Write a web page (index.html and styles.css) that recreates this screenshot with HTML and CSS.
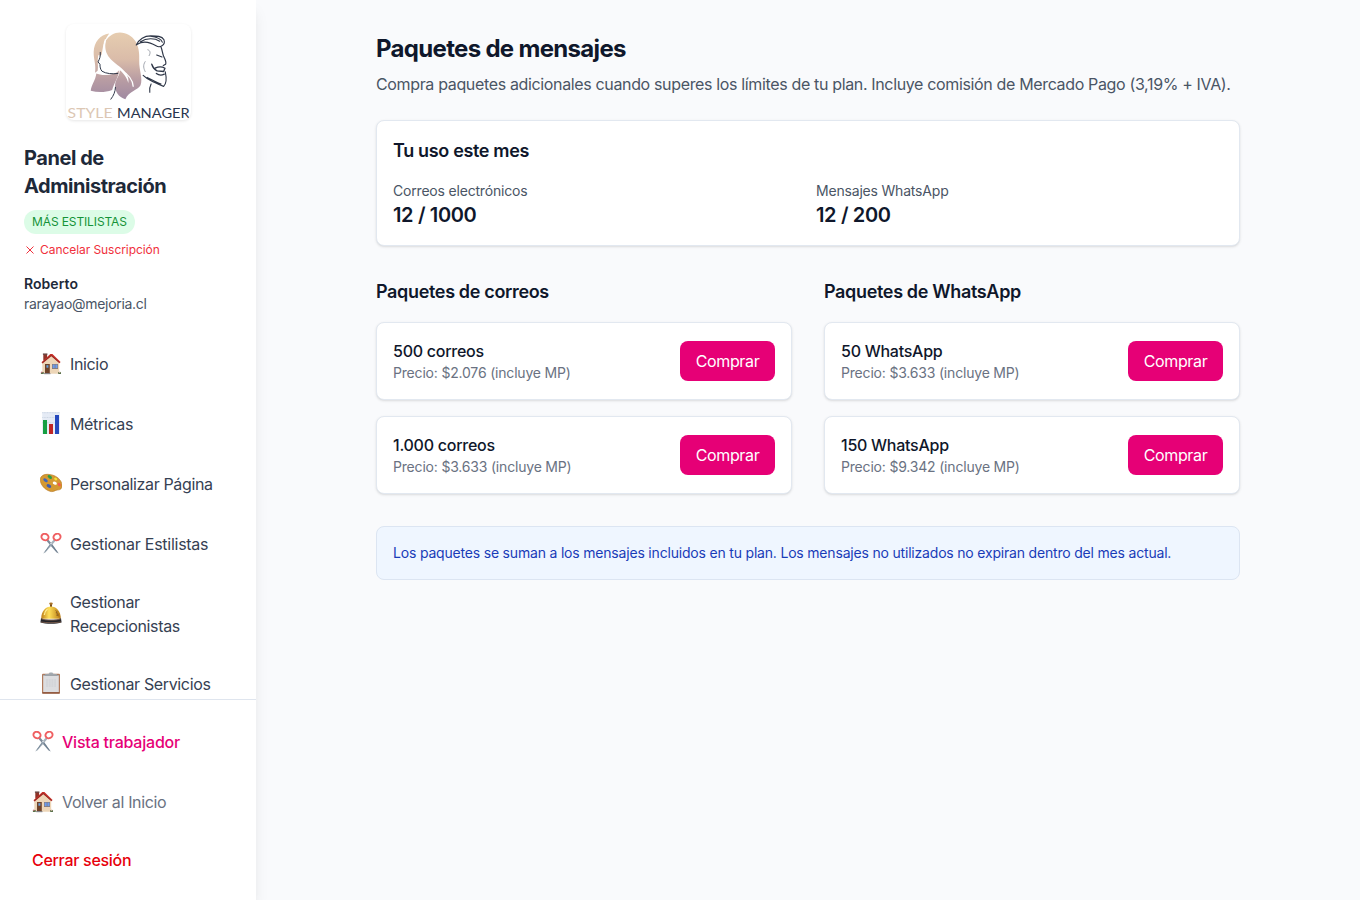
FILE: index.html
```html
<!DOCTYPE html>
<html lang="es">
<head>
<meta charset="utf-8">
<title>Paquetes de mensajes</title>
<link rel="stylesheet" href="styles.css">
</head>
<body>
<svg class="defs" aria-hidden="true">
  <defs>
    <linearGradient id="hair" gradientUnits="userSpaceOnUse" x1="0" y1="48" x2="0" y2="250"><stop offset="0" stop-color="#e6cdb0"/><stop offset=".4" stop-color="#dabca9"/><stop offset=".7" stop-color="#b99da3"/><stop offset="1" stop-color="#a08aa2"/></linearGradient>
    <linearGradient id="gold" x1="0" y1="0" x2="1" y2="0"><stop offset="0" stop-color="#bd7d18"/><stop offset=".4" stop-color="#ffe05a"/><stop offset="1" stop-color="#b87912"/></linearGradient>
    <symbol id="house" viewBox="0 0 22 22">
      <path d="M3.3 1.3h3.8v6H3.3z" fill="#8d3429"/><path d="M2.9.5h4.5v1.2H2.9z" fill="#543330"/>
      <path d="M2.3 9 11 2l8.2 7v11.8H2.3z" fill="#edd6b8"/>
      <path d="M1.5 9.3 10.3 1h2.1l8.2 8-1.2 1.3L11.3 3.2 2.6 10.5z" fill="#c92d26"/><path d="m2.4 9.7 8.8-7.2 8.3 7.1" fill="none" stroke="#5e302b" stroke-width=".6"/>
      <path d="M5 11h4.8v9.6H5z" fill="#704329"/><path d="M6.4 12.2h2v2.5h-2z" fill="#65a0de"/>
      <path d="M12 11h6v5h-6z" fill="#8a786b"/><path d="M12.6 11.6h2.1v3.7h-2.1zm2.8 0h2.1v3.7h-2.1z" fill="#6a9cf0"/>
      <path d="M4.2 20h6.2v1.2H4.2z" fill="#858388"/><path d="M.9 18.9h2.8v2.1H.9zm17.3 0h2.8v2.1h-2.8z" fill="#59724c"/><circle cx="1.8" cy="19.3" r=".8" fill="#c9747c"/><circle cx="19.7" cy="19.3" r=".8" fill="#d8b9a8"/>
    </symbol>
    <symbol id="chart" viewBox="0 0 22 22">
      <path d="M2.2 0h17.6v22H2.2z" fill="#e5ebf5"/><path d="M2.2.7h17.6M2.2 5.5h17.6M2.2 10.7h17.6" stroke="#c3cedc" stroke-width=".7" stroke-dasharray="1 .6"/>
      <path d="M3 8h4v14H3z" fill="#169f42"/><path d="M9 12h4v10H9z" fill="#bf2525"/><path d="M15 3h4v19h-4z" fill="#2549bd"/>
    </symbol>
    <symbol id="palette" viewBox="0 0 22 22">
      <path d="M.3 6.8C.3 2.8 4 .9 9 1.4c5.4.5 9.6 3 11.8 6.8 1.6 2.8 1.6 6 .2 7.6-1.4 1.5-3.5.9-5.2 1.6-1.8.8-3.2 1.7-5.8.9C4.6 16.6.3 11.6.3 6.8z" fill="#d59932" stroke="#b4731e" stroke-width=".6"/>
      <ellipse cx="14.8" cy="10.2" rx="2.1" ry="1.5" fill="#fff" transform="rotate(20 14.8 10.2)"/>
      <ellipse cx="5.5" cy="7.2" rx="2.5" ry="1.5" fill="#4067bc" transform="rotate(35 5.5 7.2)"/><ellipse cx="9.8" cy="4" rx="2.4" ry="1.5" fill="#299c47" transform="rotate(35 9.8 4)"/><ellipse cx="15.7" cy="6" rx="1.7" ry="1.2" fill="#f4e234" transform="rotate(40 15.7 6)"/><ellipse cx="8.9" cy="13" rx="2.5" ry="1.6" fill="#3f5db0" transform="rotate(25 8.9 13)"/><ellipse cx="19.2" cy="11.6" rx="1.9" ry="1.3" fill="#f2584f" transform="rotate(50 19.2 11.6)"/>
    </symbol>
    <symbol id="scissors" viewBox="0 0 22 22">
      <path d="m8 6.2 4.3 5 6.5 9.4-2.2-1.2-6.8-7.6-3.4-4z" fill="#7d8b99"/><path d="m14 6.2-4.3 5-6.5 9.4 2.2-1.2 6.8-7.6 3.4-4z" fill="#a6b1bb"/>
      <path d="m5.2 18.5 6-7.8M16.8 18.5l-6-7.8" stroke="#63788c" stroke-width=".7"/><circle cx="11" cy="10.8" r=".8" fill="#eef1f4"/>
      <g fill="none" stroke="#ef5f61" stroke-width="1.9"><ellipse cx="5" cy="4" rx="3.6" ry="3.2" transform="rotate(25 5 4)"/><ellipse cx="17" cy="4" rx="3.6" ry="3.2" transform="rotate(-25 17 4)"/></g>
    </symbol>
    <symbol id="bell" viewBox="0 0 22 22">
      <path d="M10 1.5h2v4h-2z" fill="#7b511f"/><ellipse cx="11" cy="1.6" rx="1.8" ry="1.2" fill="#aa7227"/>
      <path d="M1.2 16.8c0-8 4.7-12.4 9.8-12.4s9.8 4.4 9.8 12.4z" fill="url(#gold)"/><path d="M7.5 7c-2 1.5-3 4-3.2 6" stroke="#ffed91" fill="none" stroke-width="1.3"/><path d="m15.5 8.5 2 1.5-1.6.7 2.6 1.6-2 .8 2.9 1" fill="none" stroke="#8a5a1c" stroke-width=".8"/>
      <path d="M1 16.2c5 2 15 2 20 0l.6 4.2c-5.2 1.8-16 1.8-21.2 0z" fill="#24252a"/><path d="M1.4 17c5 1.6 14.4 1.6 19.4 0M1 20c6 .9 13.7.9 20 0" stroke="#936b54" stroke-width=".7" fill="none"/>
    </symbol>
    <symbol id="clipboard" viewBox="0 0 22 22">
      <rect x="2" y="1.8" width="18" height="20" rx="1" fill="#b07a5c"/><path d="M3.2 3h15.6v17H3.2z" fill="#dcdde0"/><path d="M2.4 20.2h17.2v1.3H2.4z" fill="#8c563e"/><path d="M5 3.5V2.2l3.8-.5.8-1.3h2.8l.8 1.3 3.8.5v1.3z" fill="#a4abb1"/><path d="M3.2 3.3h15.6" stroke="#8b9096" stroke-width=".8"/>
      <path d="M6 8h10M6 10h10M6 12h10M6 14h10" stroke="#c8cbd1" stroke-width=".8" stroke-dasharray="2 .7"/>
    </symbol>
  </defs>
</svg>
<div class="app">
  <aside class="sidebar">
    <div class="sidebar-top">
      <svg class="logo" viewBox="28 22 375 291" role="img" aria-label="Style Manager">
        <g fill="url(#hair)">
          <path d="M157 51c-28 4-46 26-47 55-1 22 8 40 4 64l8-6c3-14-2-30 2-48 6 4 10 2 11-6 3-24 10-44 22-59z"/>
          <path d="M118 172c10 4 30 8 54 0 6-2 12-6 15-10-1 20-14 36-21 60-22 8-44 8-65 2 2-18 14-30 17-52z"/>
          <path d="M147 72c12-18 34-30 57-22 38 12 46 46 44 84-1 26 12 54 4 74-6 14-36 18-46 42-20-5-34-26-31-46 3-17 15-26 14-43 10 10 22 24 26 40 4-22-12-38-27-50-26-20-50-38-41-79z"/>
        </g>
        <path d="M190 160c18 10 38 26 40 52M146 68c-10 24-4 52 10 66 10 11 24 18 34 28" fill="none" stroke="#fff" stroke-width="4"/>
        <g fill="none" stroke="#2f3748" stroke-linecap="round" stroke-linejoin="round">
          <path d="M130 108c1 13-2 20-7 29l6 7c0 8 1 15 6 21 12 8 32 9 48 7M176 214c-1 14-5 24-14 36" stroke-width="3"/>
          <path d="M239 86c8-16 24-28 44-28 18 0 34 0 40 12 3 8 0 14-6 18M241 84c22-14 42-6 58 4 6 4 12 4 18 0M252 76c18-12 42-12 58-2M282 59c18 2 32 6 36 18" stroke-width="3.4"/>
          <path d="M314 92c5 12 4 20 9 30 4 9 8 16 5 22l-7 4M301 116l16 6" stroke-width="3.6"/>
          <path d="M274 100c8 2 9 10 4 18M266 136c-8 12-4 22 0 30" stroke="#8f959f" stroke-width="2.5"/>
          <path d="M296 156c8-4 20-6 30 0l-4 10-20-2M286 144c3 10 8 16 16 20M300 172c8 6 16 6 24 2" stroke-width="4"/>
          <path d="M260 178c8 8 18 14 28 18 12 6 22 12 34 15 8-8 9-26 5-44M272 184c12 6 28 14 42 20M284 204c-4 8-6 16-4 25" stroke-width="3.4"/>
        </g>
        <text x="31" y="307" class="logo-style" textLength="136" lengthAdjust="spacingAndGlyphs">STYLE</text>
        <text x="181" y="307" class="logo-manager" textLength="220" lengthAdjust="spacingAndGlyphs">MANAGER</text>
      </svg>
      <h2 class="panel-title">Panel de Administración</h2>
      <span class="badge">MÁS ESTILISTAS</span>
      <a class="cancel"><svg class="cross" viewBox="0 0 12 12"><path d="m2.5 2.5 7 7m0-7-7 7"/></svg><span>Cancelar Suscripción</span></a>
      <p class="user-name">Roberto</p>
      <p class="user-mail">rarayao@mejoria.cl</p>
    </div>
    <nav class="nav">
      <a class="item"><svg class="icon"><use href="#house"/></svg><span>Inicio</span></a>
      <a class="item"><svg class="icon raised"><use href="#chart"/></svg><span>Métricas</span></a>
      <a class="item"><svg class="icon"><use href="#palette"/></svg><span>Personalizar Página</span></a>
      <a class="item"><svg class="icon"><use href="#scissors"/></svg><span class="wide">Gestionar Estilistas</span></a>
      <a class="item"><svg class="icon raised"><use href="#bell"/></svg><span>Gestionar Recepcionistas</span></a>
      <a class="item"><svg class="icon raised"><use href="#clipboard"/></svg><span>Gestionar Servicios</span></a>
    </nav>
    <div class="sidebar-footer">
      <a class="item worker"><svg class="icon"><use href="#scissors"/></svg><span>Vista trabajador</span></a>
      <a class="item home"><svg class="icon"><use href="#house"/></svg><span>Volver al Inicio</span></a>
      <a class="item logout"><span>Cerrar sesión</span></a>
    </div>
  </aside>
  <main class="main">
    <div class="content">
      <header>
        <h1 class="title">Paquetes de mensajes</h1>
        <p class="subtitle">Compra paquetes adicionales cuando superes los límites de tu plan. Incluye comisión de Mercado Pago (3,19% + IVA).</p>
      </header>
      <section class="card usage">
        <h2 class="heading">Tu uso este mes</h2>
        <div class="usage-grid">
          <div><p class="label">Correos electrónicos</p><p class="value">12 / 1000</p></div>
          <div><p class="label">Mensajes WhatsApp</p><p class="value">12 / 200</p></div>
        </div>
      </section>
      <div class="packages">
        <section class="column">
          <h2 class="heading">Paquetes de correos</h2>
          <div class="card package"><div><p class="name">500 correos</p><p class="price">Precio: $2.076 (incluye MP)</p></div><button class="buy">Comprar</button></div>
          <div class="card package"><div><p class="name">1.000 correos</p><p class="price">Precio: $3.633 (incluye MP)</p></div><button class="buy">Comprar</button></div>
        </section>
        <section class="column">
          <h2 class="heading">Paquetes de WhatsApp</h2>
          <div class="card package"><div><p class="name">50 WhatsApp</p><p class="price">Precio: $3.633 (incluye MP)</p></div><button class="buy">Comprar</button></div>
          <div class="card package"><div><p class="name">150 WhatsApp</p><p class="price">Precio: $9.342 (incluye MP)</p></div><button class="buy">Comprar</button></div>
        </section>
      </div>
      <div class="note">Los paquetes se suman a los mensajes incluidos en tu plan. Los mensajes no utilizados no expiran dentro del mes actual.</div>
    </div>
  </main>
</div>
</body>
</html>
```
FILE: styles.css
```css
* { box-sizing: border-box; }
body, h1, h2, p { margin: 0; }
body {
  font: 400 16px/24px Inter, "Liberation Sans", sans-serif;
  letter-spacing: -0.35px;
  color: #0f172b;
  background: #f9fafc;
}
.defs { display: block; width: 0; height: 0; }
.app { display: flex; height: 900px; overflow: hidden; }

.sidebar {
  display: flex;
  flex-direction: column;
  width: 256px;
  flex: none;
  background: #fff;
  box-shadow: 0 10px 15px -3px rgba(0, 0, 0, .1), 0 4px 6px -4px rgba(0, 0, 0, .1);
}
.sidebar-top { display: flex; flex-direction: column; align-items: flex-start; flex: none; padding: 24px 24px 0; }
.logo {
  align-self: center;
  width: 125px;
  height: 96px;
  margin-bottom: 24px;
  border-radius: 8px;
  box-shadow: 0 1px 3px rgba(0, 0, 0, .1);
}
.logo text { font: 400 39px Lato, sans-serif; letter-spacing: 0; }
.logo-style { fill: #dcc7b4; }
.logo-manager { fill: #29354d; }
.panel-title { width: 208px; padding-right: 40px; font-size: 20px; line-height: 28px; font-weight: 700; color: #1e2939; letter-spacing: -0.45px; }
.badge { margin-top: 10px; padding: 4px 8px; border-radius: 12px; background: #dcfce7; color: #159338; font-size: 12px; line-height: 16px; letter-spacing: -0.12px; }
.cancel { display: flex; align-items: center; gap: 4px; margin-top: 8px; color: #f0303c; font-size: 12px; line-height: 16px; letter-spacing: -0.06px; }
.cross { width: 12px; height: 12px; fill: none; stroke: currentColor; stroke-width: 1; }
.user-name { margin-top: 16px; font-size: 14px; line-height: 20px; font-weight: 600; color: #1e2939; letter-spacing: 0.05px; }
.user-mail { font-size: 14px; line-height: 20px; color: #4a5565; letter-spacing: -0.3px; }

.nav { display: flex; flex-direction: column; gap: 8px; flex: 1; min-height: 0; overflow: hidden; padding: 24px 24px 0; }
.item { display: flex; align-items: center; gap: 8px; flex: none; min-height: 52px; padding: 2px 16px; color: #364153; }
.nav .item:nth-child(5) { min-height: 72px; }
.wide { letter-spacing: -0.26px; }
.icon { width: 22px; height: 22px; flex: none; }
.raised { margin-bottom: 2px; }
.sidebar-footer { display: flex; flex-direction: column; gap: 8px; flex: none; padding: 16px; border-top: 1px solid #dfe5ee; background: #fff; }
.worker { color: #e60076; font-weight: 500; letter-spacing: -0.22px; }
.home { color: #6a7282; }
.logout { min-height: 48px; color: #e7000b; font-weight: 500; letter-spacing: -0.3px; }

.main { flex: 1; padding: 33px 16px 32px; }
.content { display: flex; flex-direction: column; width: 864px; margin: 0 auto; }
.title { font-size: 24px; line-height: 32px; font-weight: 700; letter-spacing: -0.68px; }
.subtitle { margin-top: 7px; color: #4a5565; white-space: nowrap; }
.card { padding: 16px; border: 1px solid #e2e8f0; border-radius: 8px; background: #fff; box-shadow: 0 1px 3px rgba(0, 0, 0, .1), 0 1px 2px -1px rgba(0, 0, 0, .1); }
.usage { margin-top: 24px; }
.heading { font-size: 18px; line-height: 28px; font-weight: 600; letter-spacing: -0.34px; }
.usage-grid { display: grid; grid-template-columns: 1fr 1fr; gap: 16px; margin-top: 16px; }
.label, .price { font-size: 14px; line-height: 20px; color: #4a5565; letter-spacing: -0.19px; }
.value { font-size: 20px; line-height: 28px; font-weight: 600; letter-spacing: -0.35px; }
.packages { display: grid; grid-template-columns: 1fr 1fr; gap: 32px; margin-top: 32px; }
.column { display: flex; flex-direction: column; gap: 16px; }
.package { display: flex; align-items: center; justify-content: space-between; }
.name { font-weight: 500; letter-spacing: -0.26px; }
.price { color: #6a7282; }
.buy { width: 95px; height: 40px; padding: 0; border: 0; border-radius: 8px; background: #e60076; color: #fff; font: inherit; letter-spacing: -0.35px; }
.note { margin-top: 32px; padding: 16px; border: 1px solid #dce5f2; border-radius: 8px; background: #eff6ff; color: #193cb8; font-size: 14px; line-height: 20px; letter-spacing: -0.19px; white-space: nowrap; }
```
